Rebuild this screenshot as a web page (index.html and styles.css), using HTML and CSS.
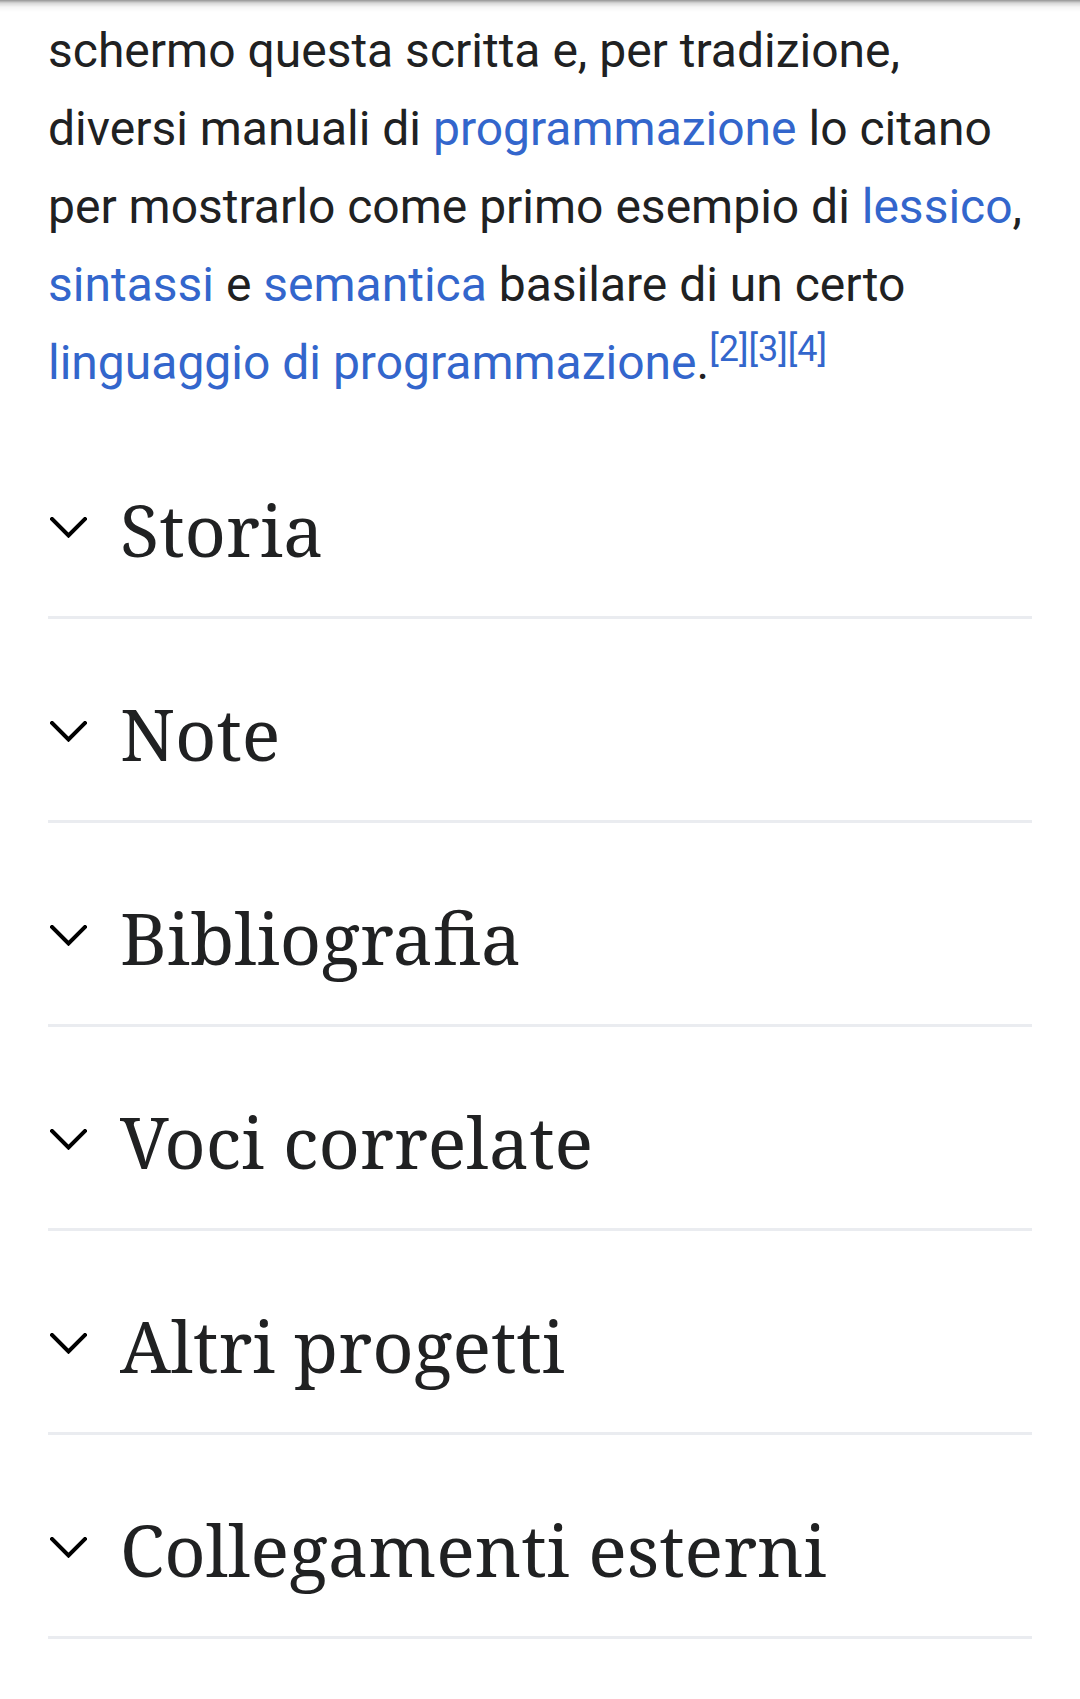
FILE: index.html
```html
<!DOCTYPE html>
<html lang="it">
<head>
<meta charset="utf-8">
<title>Hello world</title>
<link rel="stylesheet" href="styles.css">
</head>
<body>
<div class="topshadow"></div>
<main class="content">
  <p class="lead">schermo questa scritta e, per tradizione, diversi manuali di <a href="#">programmazione</a> lo citano per mostrarlo come primo esempio di <a href="#">lessico</a>, <a href="#">sintassi</a> e <a href="#">semantica</a> basilare di un certo <a href="#">linguaggio di programmazione</a>.<sup><a href="#">[2]</a><a href="#">[3]</a><a href="#">[4]</a></sup></p>

  <section class="section">
    <svg class="chev" viewBox="0 0 37 21" width="37" height="21"><path d="M2 2 L18.5 18.5 L35 2"/></svg>
    <h2>Storia</h2>
  </section>
  <section class="section">
    <svg class="chev" viewBox="0 0 37 21" width="37" height="21"><path d="M2 2 L18.5 18.5 L35 2"/></svg>
    <h2>Note</h2>
  </section>
  <section class="section">
    <svg class="chev" viewBox="0 0 37 21" width="37" height="21"><path d="M2 2 L18.5 18.5 L35 2"/></svg>
    <h2>Bibliografia</h2>
  </section>
  <section class="section">
    <svg class="chev" viewBox="0 0 37 21" width="37" height="21"><path d="M2 2 L18.5 18.5 L35 2"/></svg>
    <h2>Voci correlate</h2>
  </section>
  <section class="section">
    <svg class="chev" viewBox="0 0 37 21" width="37" height="21"><path d="M2 2 L18.5 18.5 L35 2"/></svg>
    <h2>Altri progetti</h2>
  </section>
  <section class="section">
    <svg class="chev" viewBox="0 0 37 21" width="37" height="21"><path d="M2 2 L18.5 18.5 L35 2"/></svg>
    <h2>Collegamenti esterni</h2>
  </section>
</main>
</body>
</html>
```
FILE: styles.css
```css
html, body {
  margin: 0;
  padding: 0;
  background: #ffffff;
}
body {
  font-family: Roboto, "Noto Sans", sans-serif;
  color: #202122;
}
.topshadow {
  position: fixed;
  top: 0;
  left: 0;
  right: 0;
  height: 12px;
  background: linear-gradient(to bottom, rgba(0,0,0,0.42) 0, rgba(0,0,0,0.16) 3px, rgba(0,0,0,0.04) 7px, rgba(0,0,0,0) 12px);
  z-index: 5;
}
.content {
  padding: 0 48px;
}
.lead {
  margin: 12px 0 13px 0;
  font-size: 48px;
  line-height: 78px;
}
.lead a {
  color: #3366cc;
  text-decoration: none;
}
.lead sup {
  font-size: 36px;
  line-height: 0;
  vertical-align: 0;
  position: relative;
  top: -18px;
}
.section {
  display: flex;
  align-items: center;
  padding: 74px 0 47px 0;
  border-bottom: 3px solid #eaecf0;
}
.chev {
  flex: none;
  margin-left: 2px;
  margin-right: 33px;
  margin-top: -4px;
  fill: none;
  stroke: #000000;
  stroke-width: 4;
  stroke-linecap: square;
}
.section h2 {
  margin: 0;
  font-family: "Noto Serif", "DejaVu Serif", serif;
  font-weight: normal;
  font-size: 72px;
  line-height: 80px;
  color: #202122;
}
```
